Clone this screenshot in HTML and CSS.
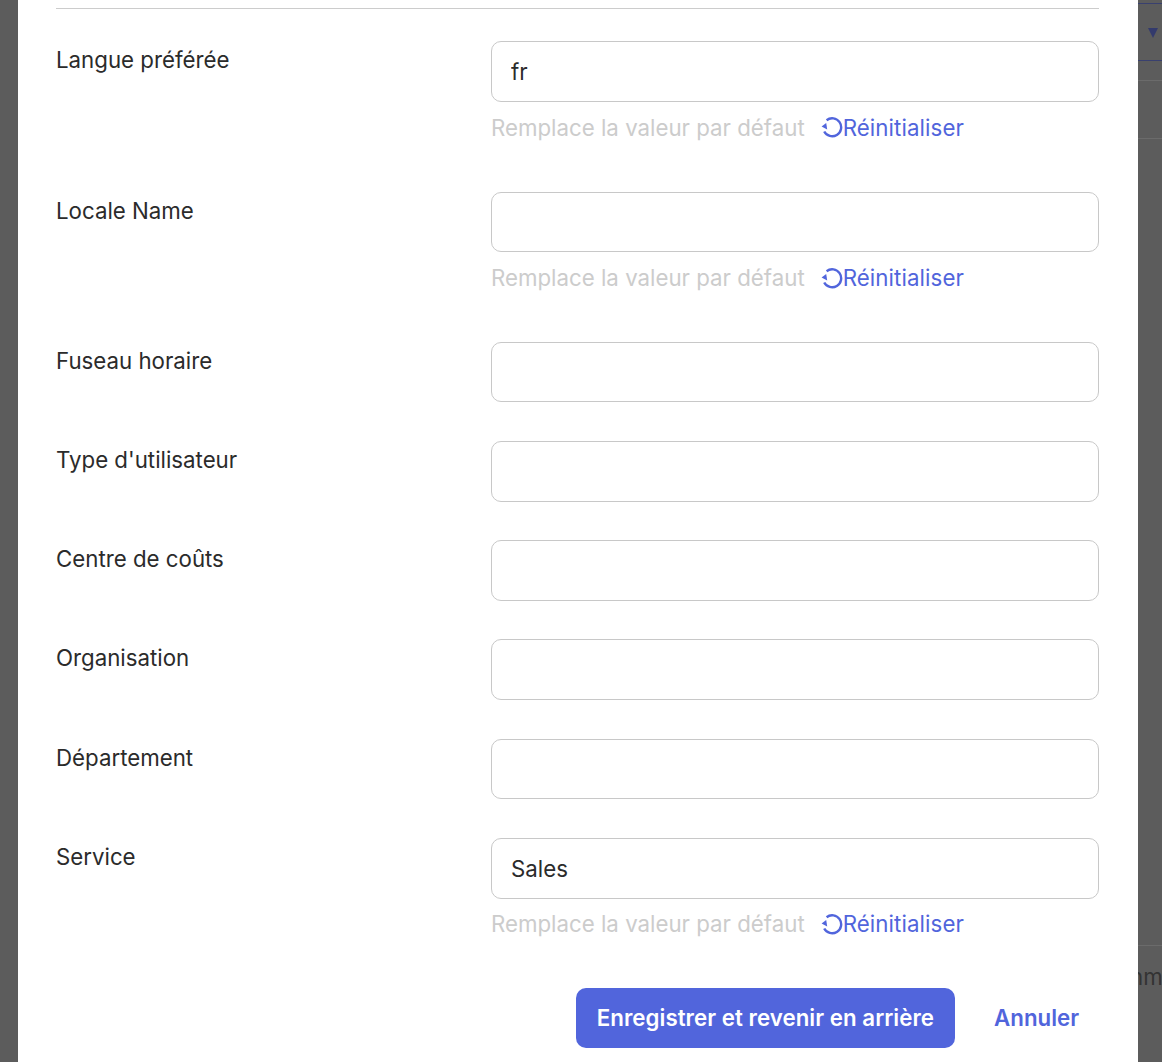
FILE: index.html
```html
<!DOCTYPE html>
<html lang="fr">
<head>
    <meta charset="UTF-8">
    <title>Modifier l'utilisateur</title>
    <link rel="stylesheet" href="styles.css">
</head>
<body>
<div class="backdrop backdrop-left"></div>

<form class="modal">
    <div class="field">
        <label>Langue préférée</label>
        <div class="control">
            <input type="text" value="fr">
            <div class="hint">
                <span>Remplace la valeur par défaut</span>
                <a class="reset" href="#">
                    <svg viewBox="0 0 22 22" width="22" height="22"><path d="M5.6 4.2A9 9 0 1 1 3.2 15.5"/><path class="fill" d="M0.6 10.5 5.2 7l1 6.4z"/></svg>Réinitialiser
                </a>
            </div>
        </div>
    </div>
    <div class="field">
        <label>Locale Name</label>
        <div class="control">
            <input type="text">
            <div class="hint">
                <span>Remplace la valeur par défaut</span>
                <a class="reset" href="#">
                    <svg viewBox="0 0 22 22" width="22" height="22"><path d="M5.6 4.2A9 9 0 1 1 3.2 15.5"/><path class="fill" d="M0.6 10.5 5.2 7l1 6.4z"/></svg>Réinitialiser
                </a>
            </div>
        </div>
    </div>
    <div class="field">
        <label>Fuseau horaire</label>
        <div class="control"><input type="text"></div>
    </div>
    <div class="field">
        <label>Type d'utilisateur</label>
        <div class="control"><input type="text"></div>
    </div>
    <div class="field">
        <label>Centre de coûts</label>
        <div class="control"><input type="text"></div>
    </div>
    <div class="field">
        <label>Organisation</label>
        <div class="control"><input type="text"></div>
    </div>
    <div class="field">
        <label>Département</label>
        <div class="control"><input type="text"></div>
    </div>
    <div class="field">
        <label>Service</label>
        <div class="control">
            <input type="text" value="Sales">
            <div class="hint">
                <span>Remplace la valeur par défaut</span>
                <a class="reset" href="#">
                    <svg viewBox="0 0 22 22" width="22" height="22"><path d="M5.6 4.2A9 9 0 1 1 3.2 15.5"/><path class="fill" d="M0.6 10.5 5.2 7l1 6.4z"/></svg>Réinitialiser
                </a>
            </div>
        </div>
    </div>
    <div class="actions">
        <button type="button" class="save">Enregistrer et revenir en arrière</button>
        <a class="cancel" href="#">Annuler</a>
    </div>
</form>

<div class="backdrop backdrop-right">
    <div class="tab-bar"><span class="arrow"></span></div>
    <div class="row row-short"></div>
    <div class="row row-tall"></div>
    <div class="row-last">nm</div>
</div>
</body>
</html>
```

FILE: styles.css
```css
* {
    box-sizing: border-box;
}

html,
body {
    height: 100%;
}

body {
    margin: 0;
    display: flex;
    height: 1062px;
    overflow: hidden;
    background-color: #5c5c5c;
    font-family: "Inter", "Liberation Sans", sans-serif;
    font-size: 22.27px;
    color: #2b2b2b;
}

.backdrop-left {
    width: 18px;
    flex-shrink: 0;
}

.backdrop-right {
    width: 24px;
    flex-shrink: 0;
    overflow: hidden;
    padding-top: 3px;
}

.tab-bar {
    height: 58px;
    border-top: 1px solid #39406f;
    border-bottom: 1px solid #39406f;
    padding: 24px 0 0 10px;
}

.arrow {
    display: block;
    width: 0;
    height: 0;
    border-left: 5px solid transparent;
    border-right: 5px solid transparent;
    border-top: 10px solid #333a6c;
}

.row {
    border-bottom: 1px solid #6b6b6b;
}

.row-short {
    height: 20px;
}

.row-tall {
    height: 58px;
}

.row-last {
    margin-top: 806px;
    padding-top: 17px;
    border-top: 1px solid #6b6b6b;
    margin-left: -8px;
    white-space: nowrap;
    color: #333;
}

.modal {
    width: 1120px;
    flex-shrink: 0;
    height: 1062px;
    background-color: #fff;
    padding: 8px 39px 0 38px;
}

.field {
    display: flex;
    align-items: flex-start;
    padding-top: 32.45px;
    padding-bottom: 5.93px;
}

.field:first-child {
    border-top: 1px solid #cccccc;
}

.field:first-child .hint {
    margin-bottom: 12.25px;
}

label {
    width: 435px;
    flex-shrink: 0;
    padding-top: 5px;
    line-height: 27px;
}

.control {
    flex: 1;
}

input {
    display: block;
    width: 100%;
    height: 60.9px;
    padding: 0 19px;
    border: 1px solid #c8c8c8;
    border-radius: 10px;
    font: inherit;
    color: inherit;
    outline: none;
}

.hint {
    display: flex;
    align-items: center;
    gap: 16px;
    height: 27px;
    margin-top: 11.6px;
    margin-bottom: 12.2px;
    color: #cccccc;
}

.reset {
    display: flex;
    align-items: center;
    color: #5165dc;
    letter-spacing: 0.1px;
    text-decoration: none;
}

.reset svg {
    fill: none;
    stroke: currentColor;
    stroke-width: 2.4;
}

.reset svg .fill {
    fill: currentColor;
    stroke: none;
}

.actions {
    display: flex;
    justify-content: flex-end;
    align-items: center;
    gap: 39px;
    padding: 32.4px 20px 0 0;
}

.save {
    height: 60px;
    padding: 0 21px;
    border: none;
    border-radius: 10px;
    background-color: #5165dc;
    color: #fff;
    font: inherit;
    font-weight: 600;
    letter-spacing: 0.05px;
    cursor: pointer;
}

.cancel {
    color: #5165dc;
    font-weight: 600;
    text-decoration: none;
}
```
